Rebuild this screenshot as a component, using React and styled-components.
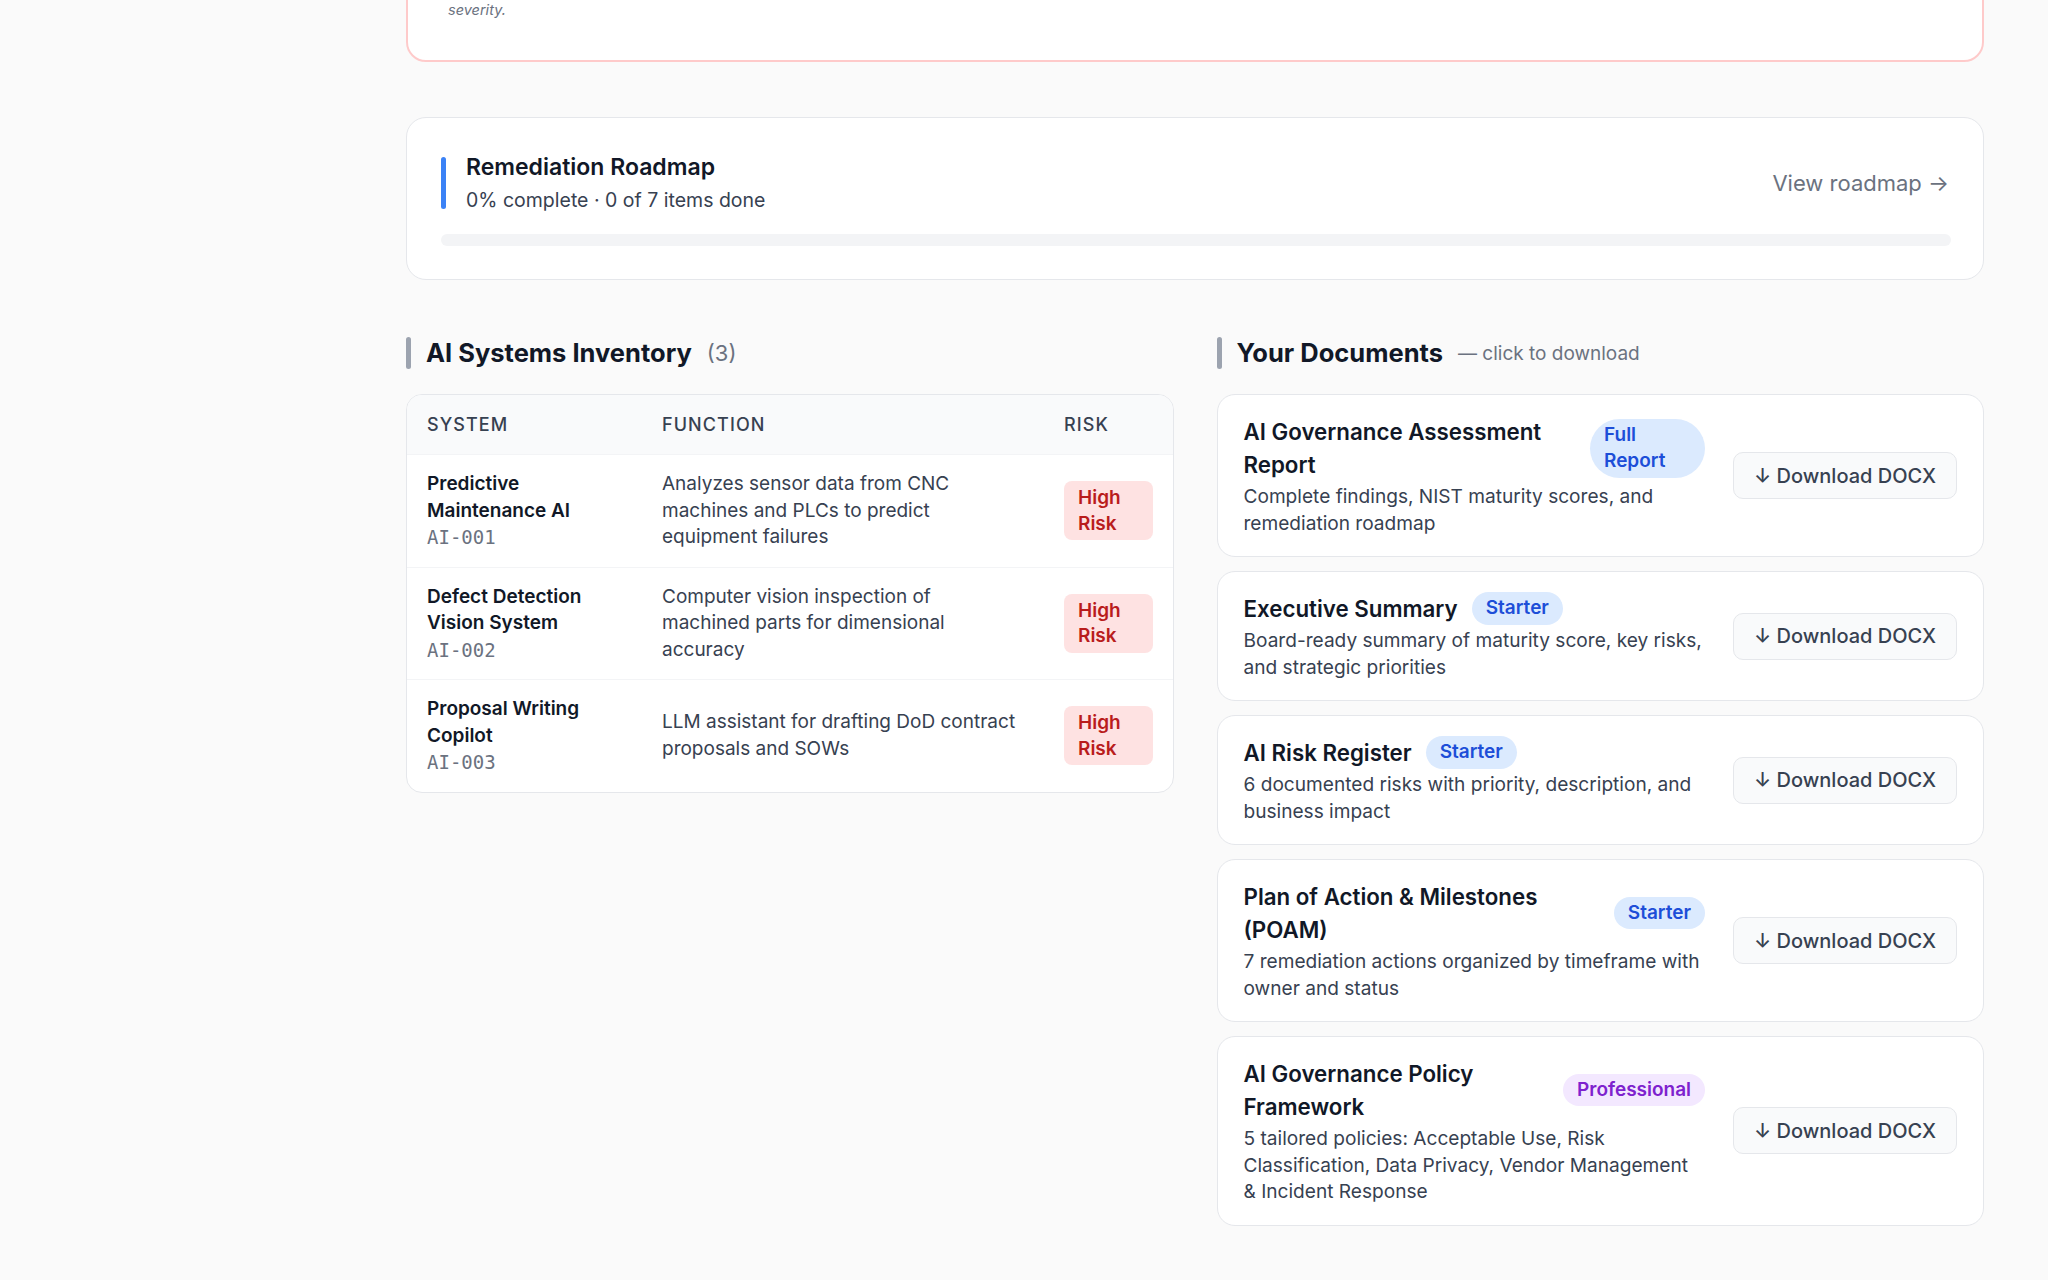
import React from 'react'
import styled, { createGlobalStyle } from 'styled-components'

const GlobalStyle = createGlobalStyle`
  html, body {
    margin: 0;
    padding: 0;
    background: #fafafa;
  }
  body {
    font-family: "Inter", "Liberation Sans", sans-serif;
    color: #111827;
    -webkit-font-smoothing: antialiased;
  }
  * { box-sizing: border-box; }
`

const systems = [
  { name: 'Predictive Maintenance AI', id: 'AI-001', fn: 'Analyzes sensor data from CNC machines and PLCs to predict equipment failures' },
  { name: 'Defect Detection Vision System', id: 'AI-002', fn: 'Computer vision inspection of machined parts for dimensional accuracy' },
  { name: 'Proposal Writing Copilot', id: 'AI-003', fn: 'LLM assistant for drafting DoD contract proposals and SOWs' },
]

const documents = [
  { title: 'AI Governance Assessment Report', tier: 'Full Report', tone: 'blue', desc: 'Complete findings, NIST maturity scores, and remediation roadmap' },
  { title: 'Executive Summary', tier: 'Starter', tone: 'blue', desc: 'Board-ready summary of maturity score, key risks, and strategic priorities' },
  { title: 'AI Risk Register', tier: 'Starter', tone: 'blue', desc: '6 documented risks with priority, description, and business impact' },
  { title: 'Plan of Action & Milestones (POAM)', tier: 'Starter', tone: 'blue', desc: '7 remediation actions organized by timeframe with owner and status' },
  { title: 'AI Governance Policy Framework', tier: 'Professional', tone: 'purple', desc: '5 tailored policies: Acceptable Use, Risk Classification, Data Privacy, Vendor Management &\u00a0Incident Response' },
]

const App = () => {
  const done = 0
  const total = 7
  return (
    <>
      <GlobalStyle />
      <Page>
        <AlertCard>
          <Note>severity.</Note>
        </AlertCard>

        <RoadmapCard>
          <RoadmapHead>
            <RoadmapTitle>
              <div>
                <h2>Remediation Roadmap</h2>
                <p>{Math.round((done / total) * 100)}% complete · {done} of {total} items done</p>
              </div>
            </RoadmapTitle>
            <ViewLink href="#">View roadmap →</ViewLink>
          </RoadmapHead>
          <Track>
            <Fill style={{ width: `${(done / total) * 100}%` }} />
          </Track>
        </RoadmapCard>

        <Columns>
          <section>
            <SectionHeading>
              <h2>AI Systems Inventory</h2>
              <Count>(3)</Count>
            </SectionHeading>
            <TableCard>
              <HeadRow>
                <HeadCell>System</HeadCell>
                <HeadCell>Function</HeadCell>
                <HeadCell>Risk</HeadCell>
              </HeadRow>
              {systems.map(s => (
                <BodyRow key={s.id}>
                  <Cell>
                    <SysName>{s.name}</SysName>
                    <SysId>{s.id}</SysId>
                  </Cell>
                  <Cell>
                    <FnText>{s.fn}</FnText>
                  </Cell>
                  <Cell>
                    <RiskBadge>High Risk</RiskBadge>
                  </Cell>
                </BodyRow>
              ))}
            </TableCard>
          </section>

          <section>
            <SectionHeading>
              <h2>Your Documents</h2>
              <Hint>— click to download</Hint>
            </SectionHeading>
            <DocList>
              {documents.map(d => (
                <DocCard key={d.title}>
                  <DocBody>
                    <DocTitleRow>
                      <h3>{d.title}</h3>
                      <TierBadge tone={d.tone}>{d.tier}</TierBadge>
                    </DocTitleRow>
                    <DocDesc>{d.desc}</DocDesc>
                  </DocBody>
                  <DownloadButton>↓ Download DOCX</DownloadButton>
                </DocCard>
              ))}
            </DocList>
          </section>
        </Columns>
      </Page>
    </>
  )
}

export default App

const Page = styled.main`
  min-height: 100vh;
  padding: 0 64px 48px 406px;
  overflow: hidden;
`

const AlertCard = styled.div`
  margin-top: -34px;
  background: #fff;
  border: 2px solid #fecaca;
  border-radius: 20px;
  padding: 32px 40px 40px;
`

const Note = styled.p`
  margin: 0;
  font-size: 14.5px;
  line-height: 20px;
  font-style: italic;
  color: #6b7280;
`

const RoadmapCard = styled.div`
  margin-top: 55px;
  background: #fff;
  border: 1px solid #e5e7eb;
  border-radius: 20px;
  padding: 35px 32px 33px 34px;
`

const RoadmapHead = styled.div`
  display: flex;
  align-items: center;
  justify-content: space-between;
`

const RoadmapTitle = styled.div`
  display: flex;
  align-items: center;
  gap: 20px;

  &::before {
    content: '';
    width: 5px;
    height: 52px;
    border-radius: 3px;
    background: #3b82f6;
  }

  h2 {
    margin: 0;
    font-size: 23px;
    line-height: 28px;
    font-weight: 600;
    color: #111827;
  }
  p {
    margin: 6px 0 0;
    font-size: 19.5px;
    line-height: 26px;
    color: #374151;
  }
`

const ViewLink = styled.a`
  font-size: 22px;
  color: #6b7280;
  text-decoration: none;
  margin-right: 2px;
`

const Track = styled.div`
  margin-top: 21px;
  height: 12px;
  border-radius: 999px;
  background: #f3f4f6;
  overflow: hidden;
`

const Fill = styled.div`
  height: 100%;
  background: #3b82f6;
`

const Columns = styled.div`
  margin-top: 57px;
  display: grid;
  grid-template-columns: 1fr 1fr;
  column-gap: 43px;
  align-items: start;
`

const SectionHeading = styled.div`
  display: flex;
  align-items: center;
  gap: 15px;
  height: 32px;
  margin-bottom: 25px;

  &::before {
    content: '';
    width: 5px;
    height: 32px;
    border-radius: 3px;
    background: #9ca3af;
  }

  h2 {
    margin: 0;
    font-size: 25.5px;
    line-height: 32px;
    font-weight: 700;
    color: #111827;
  }
`

const Count = styled.span`
  font-size: 22px;
  color: #6b7280;
`

const Hint = styled.span`
  font-size: 19px;
  color: #6b7280;
`

const TableCard = styled.div`
  background: #fff;
  border: 1px solid #e5e7eb;
  border-radius: 16px;
  overflow: hidden;
`

const HeadRow = styled.div`
  display: grid;
  grid-template-columns: 235px 402px 1fr;
  align-items: center;
  height: 60px;
  background: #f9fafb;
  border-bottom: 1px solid #f3f4f6;
`

const HeadCell = styled.div`
  padding: 0 20px;
  font-size: 18px;
  font-weight: 500;
  letter-spacing: 0.06em;
  text-transform: uppercase;
  color: #374151;
`

const BodyRow = styled.div`
  display: grid;
  grid-template-columns: 235px 402px 1fr;
  align-items: center;
  & + & {
    border-top: 1px solid #f3f4f6;
  }
`

const Cell = styled.div`
  padding: 16px 20px;
`

const SysName = styled.div`
  font-size: 19px;
  line-height: 26.5px;
  font-weight: 600;
  color: #111827;
`

const SysId = styled.div`
  font-family: "DejaVu Sans Mono", "Liberation Mono", monospace;
  font-size: 19px;
  line-height: 26.5px;
  color: #6b7280;
`

const FnText = styled.div`
  font-size: 19px;
  line-height: 26.5px;
  color: #374151;
`

const RiskBadge = styled.span`
  display: inline-block;
  padding: 4px 14px;
  border-radius: 8px;
  background: #fee2e2;
  color: #b91c1c;
  font-size: 19px;
  line-height: 25.5px;
  font-weight: 600;
`

const DocList = styled.div`
  display: flex;
  flex-direction: column;
  gap: 14px;
`

const DocCard = styled.div`
  display: flex;
  align-items: center;
  gap: 28px;
  background: #fff;
  border: 1px solid #e5e7eb;
  border-radius: 18px;
  padding: 20px 26px;
`

const DocBody = styled.div`
  flex: 1;
  min-width: 0;
`

const DocTitleRow = styled.div`
  display: flex;
  align-items: center;
  gap: 14px;

  h3 {
    margin: 0;
    font-size: 22.3px;
    line-height: 33px;
    font-weight: 600;
    color: #111827;
  }
`

const tones = {
  blue: { bg: '#dbeafe', fg: '#1d4ed8' },
  purple: { bg: '#f3e8ff', fg: '#7e22ce' },
}

const TierBadge = styled.span`
  padding: 3px 14px;
  border-radius: 999px;
  background: ${p => tones[p.tone].bg};
  color: ${p => tones[p.tone].fg};
  font-size: 19px;
  line-height: 26.5px;
  font-weight: 600;
`

const DocDesc = styled.p`
  margin: 2px 0 0;
  font-size: 19.1px;
  line-height: 26.5px;
  color: #374151;
`

const DownloadButton = styled.button`
  flex-shrink: 0;
  height: 47px;
  padding: 0 20px;
  border: 1px solid #e5e7eb;
  border-radius: 10px;
  background: #f9fafb;
  font-family: inherit;
  font-size: 20px;
  font-weight: 500;
  color: #374151;
  cursor: pointer;
`
